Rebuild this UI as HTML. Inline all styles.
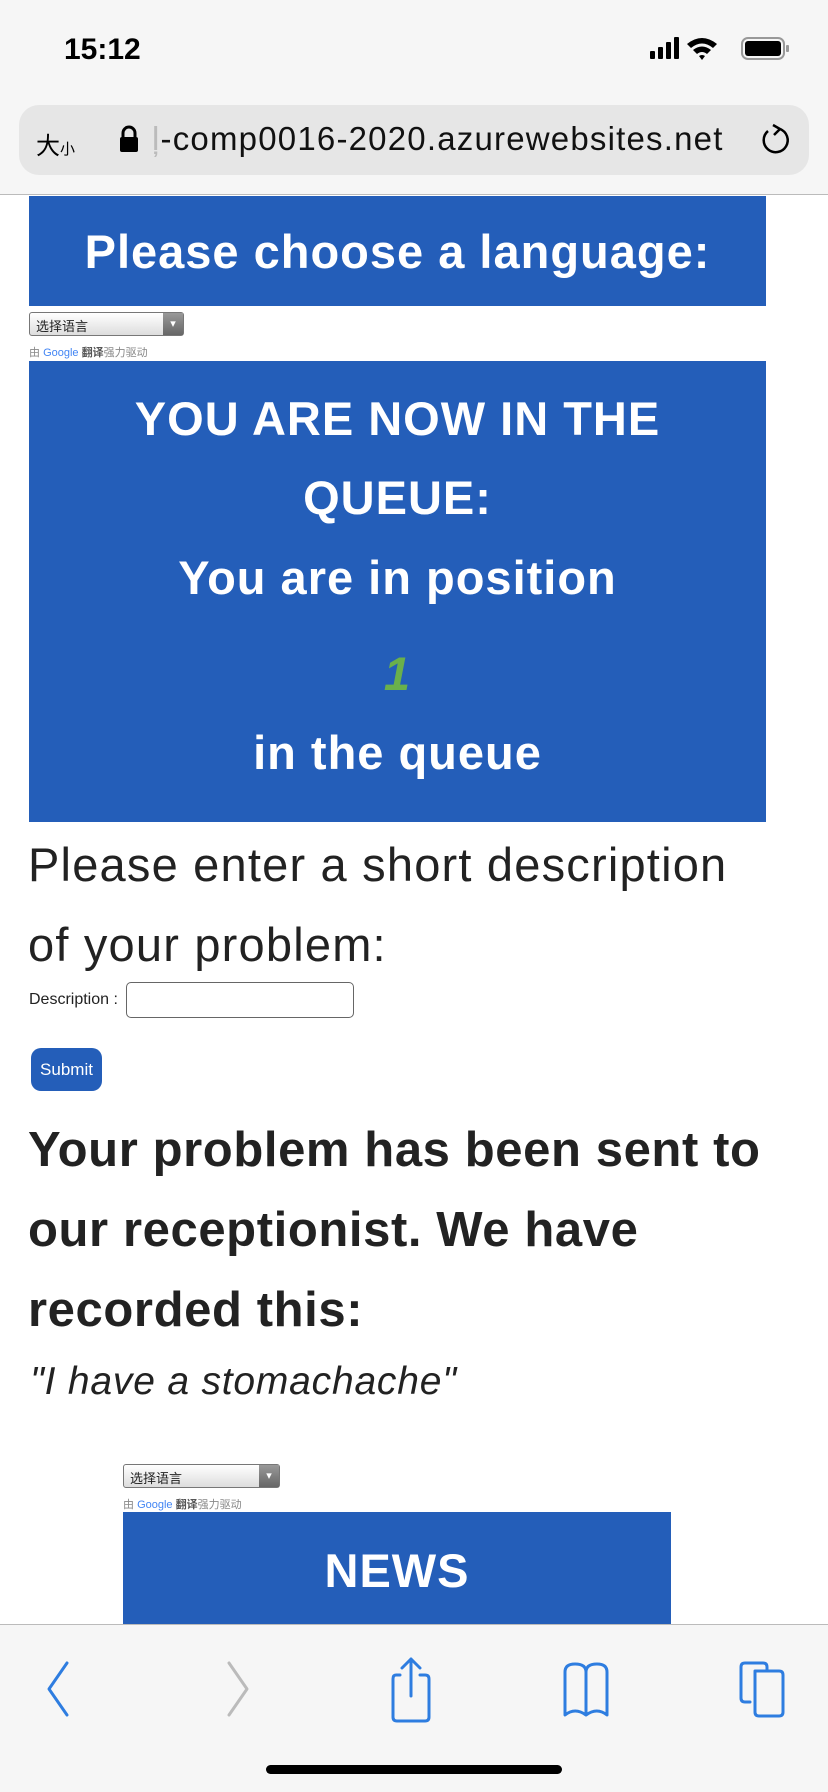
<!DOCTYPE html>
<html><head><meta charset="utf-8"><style>
*{margin:0;padding:0;box-sizing:border-box}
body{width:828px;height:1792px;position:relative;overflow:hidden;background:#fff;font-family:"Liberation Sans","Noto Sans CJK SC",sans-serif;color:#222}
.abs{position:absolute}
.blue{background:#245eb9;color:#fff;font-weight:bold;text-align:center;letter-spacing:1px}
.c{position:absolute;left:0;right:0;text-align:center;line-height:1}
.sel{position:absolute;height:24px;border:1px solid #777;border-radius:3px;background:linear-gradient(#fff,#ddd);font-size:13px;padding:3px 6px;color:#222;letter-spacing:0}
.sel:after{content:"▾";position:absolute;right:0;top:0;bottom:0;width:20px;background:linear-gradient(#999,#666);color:#fff;font-size:11px;text-align:center;line-height:22px}
.g{position:absolute;font-size:11px;color:#888}
.g b{color:#4285f4;font-weight:normal}
</style></head><body>
<div class="abs" style="left:0;top:0;width:828px;height:195px;background:#f6f6f6;border-bottom:1px solid #bbb"></div>
<div class="abs" style="left:64px;top:33px;font-size:30px;font-weight:bold;color:#000">15:12</div>
<svg class="abs" style="left:650px;top:36px" width="150" height="26">
<rect x="0" y="15" width="5" height="8" rx="1" fill="#000"/><rect x="8" y="11" width="5" height="12" rx="1" fill="#000"/><rect x="16" y="6" width="5" height="17" rx="1" fill="#000"/><rect x="24" y="1" width="5" height="22" rx="1" fill="#000"/>
<path d="M37 8 Q52 -4 67 8 L63 12 Q52 3 41 12Z M43 14 Q52 7 61 14 L57 18 Q52 14 47 18Z M49 20 L52 24 L55 20 Q52 18 49 20Z" fill="#000"/>
<rect x="92" y="2" width="42" height="21" rx="6" fill="none" stroke="#999" stroke-width="2"/><rect x="95" y="5" width="36" height="15" rx="3" fill="#000"/><rect x="136" y="9" width="3" height="7" rx="1" fill="#999"/>
</svg>
<div class="abs" style="left:19px;top:105px;width:790px;height:70px;background:#e6e6e6;border-radius:20px"></div>
<div class="abs" style="left:36px;top:126px;font-size:24px;color:#000">大<span style="font-size:15px">小</span></div>
<svg class="abs" style="left:118px;top:125px" width="22" height="28"><path d="M5 12 V8 a6 6 0 0 1 12 0 V12" fill="none" stroke="#000" stroke-width="3"/><rect x="2" y="12" width="18" height="15" rx="2" fill="#000"/></svg>
<div class="abs" style="left:152px;top:120px;font-size:33px;color:#111;letter-spacing:1.2px"><span style="color:#bbb">ļ</span>-comp0016-2020.azurewebsites.net</div>
<svg class="abs" style="left:758px;top:123px" width="34" height="34"><path d="M10 8 A12 12 0 1 0 22 6" fill="none" stroke="#000" stroke-width="2.5"/><path d="M15 2 L22 6 L16 12" fill="none" stroke="#000" stroke-width="2.5"/></svg>

<div class="abs blue" style="left:29px;top:196px;width:737px;height:110px"><div class="c" style="top:32px;font-size:47px">Please choose a language:</div></div>
<div class="sel" style="left:29px;top:312px;width:155px">选择语言</div>
<div class="g" style="left:29px;top:344px">由 <b>Google</b> <span style="color:#555;font-weight:bold">翻译</span>强力驱动</div>
<div class="abs blue" style="left:29px;top:361px;width:737px;height:461px;font-size:47px">
<div class="c" style="top:34px">YOU ARE NOW IN THE</div>
<div class="c" style="top:113px">QUEUE:</div>
<div class="c" style="top:193px">You are in position</div>
<div class="c" style="top:289px;color:#6ab04c;font-style:italic">1</div>
<div class="c" style="top:368px">in the queue</div>
</div>
<div class="abs" style="left:28px;top:825px;font-size:47px;line-height:80px;color:#222;letter-spacing:1.2px">Please enter a short description<br>of your problem:</div>
<div class="abs" style="left:29px;top:991px;font-size:16px">Description :</div>
<div class="abs" style="left:126px;top:982px;width:228px;height:36px;border:1px solid #666;border-radius:5px"></div>
<div class="abs" style="left:31px;top:1048px;width:71px;height:43px;background:#245eb9;border-radius:10px;color:#fff;font-size:17px;text-align:center;line-height:43px">Submit</div>
<div class="abs" style="left:28px;top:1110px;font-size:49px;font-weight:bold;line-height:80px;color:#222;letter-spacing:0.6px">Your problem has been sent to<br>our receptionist. We have<br>recorded this:</div>
<div class="abs" style="left:30px;top:1360px;font-size:39px;font-style:italic;letter-spacing:0.8px">"I have a stomachache"</div>
<div class="sel" style="left:123px;top:1464px;width:157px">选择语言</div>
<div class="g" style="left:123px;top:1496px">由 <b>Google</b> <span style="color:#555;font-weight:bold">翻译</span>强力驱动</div>
<div class="abs blue" style="left:123px;top:1512px;width:548px;height:112px"><div class="c" style="top:35px;font-size:47px">NEWS</div></div>

<div class="abs" style="left:0;top:1624px;width:828px;height:168px;background:#f6f6f6;border-top:1px solid #bbb"></div>
<svg class="abs" style="left:0;top:1624px" width="828" height="168" fill="none" stroke-width="3" stroke-linecap="round" stroke-linejoin="round">
<path d="M67 39 L49 65 L67 91" stroke="#2e7de0"/>
<path d="M229 39 L247 65 L229 91" stroke="#bbb"/>
<path d="M400 51 H396 Q393 51 393 55 V93 Q393 97 397 97 H425 Q429 97 429 93 V55 Q429 51 425 51 H420 M411 72 V35 M402 44 L411 35 L420 44" stroke="#2e7de0"/>
<path d="M565 91 V48 Q565 40 575 40 Q586 40 586 48 Q586 40 597 40 Q607 40 607 48 V91 Q597 83 586 91 Q575 83 565 91Z M586 48 V89" stroke="#2e7de0"/>
<path d="M750 78 H745 Q741 78 741 74 V43 Q741 39 745 39 H763 Q767 39 767 43 V47 M755 47 H779 Q783 47 783 51 V88 Q783 92 779 92 H759 Q755 92 755 88Z" stroke="#2e7de0"/>
</svg>
<div class="abs" style="left:266px;top:1765px;width:296px;height:9px;background:#000;border-radius:5px"></div>
</body></html>
